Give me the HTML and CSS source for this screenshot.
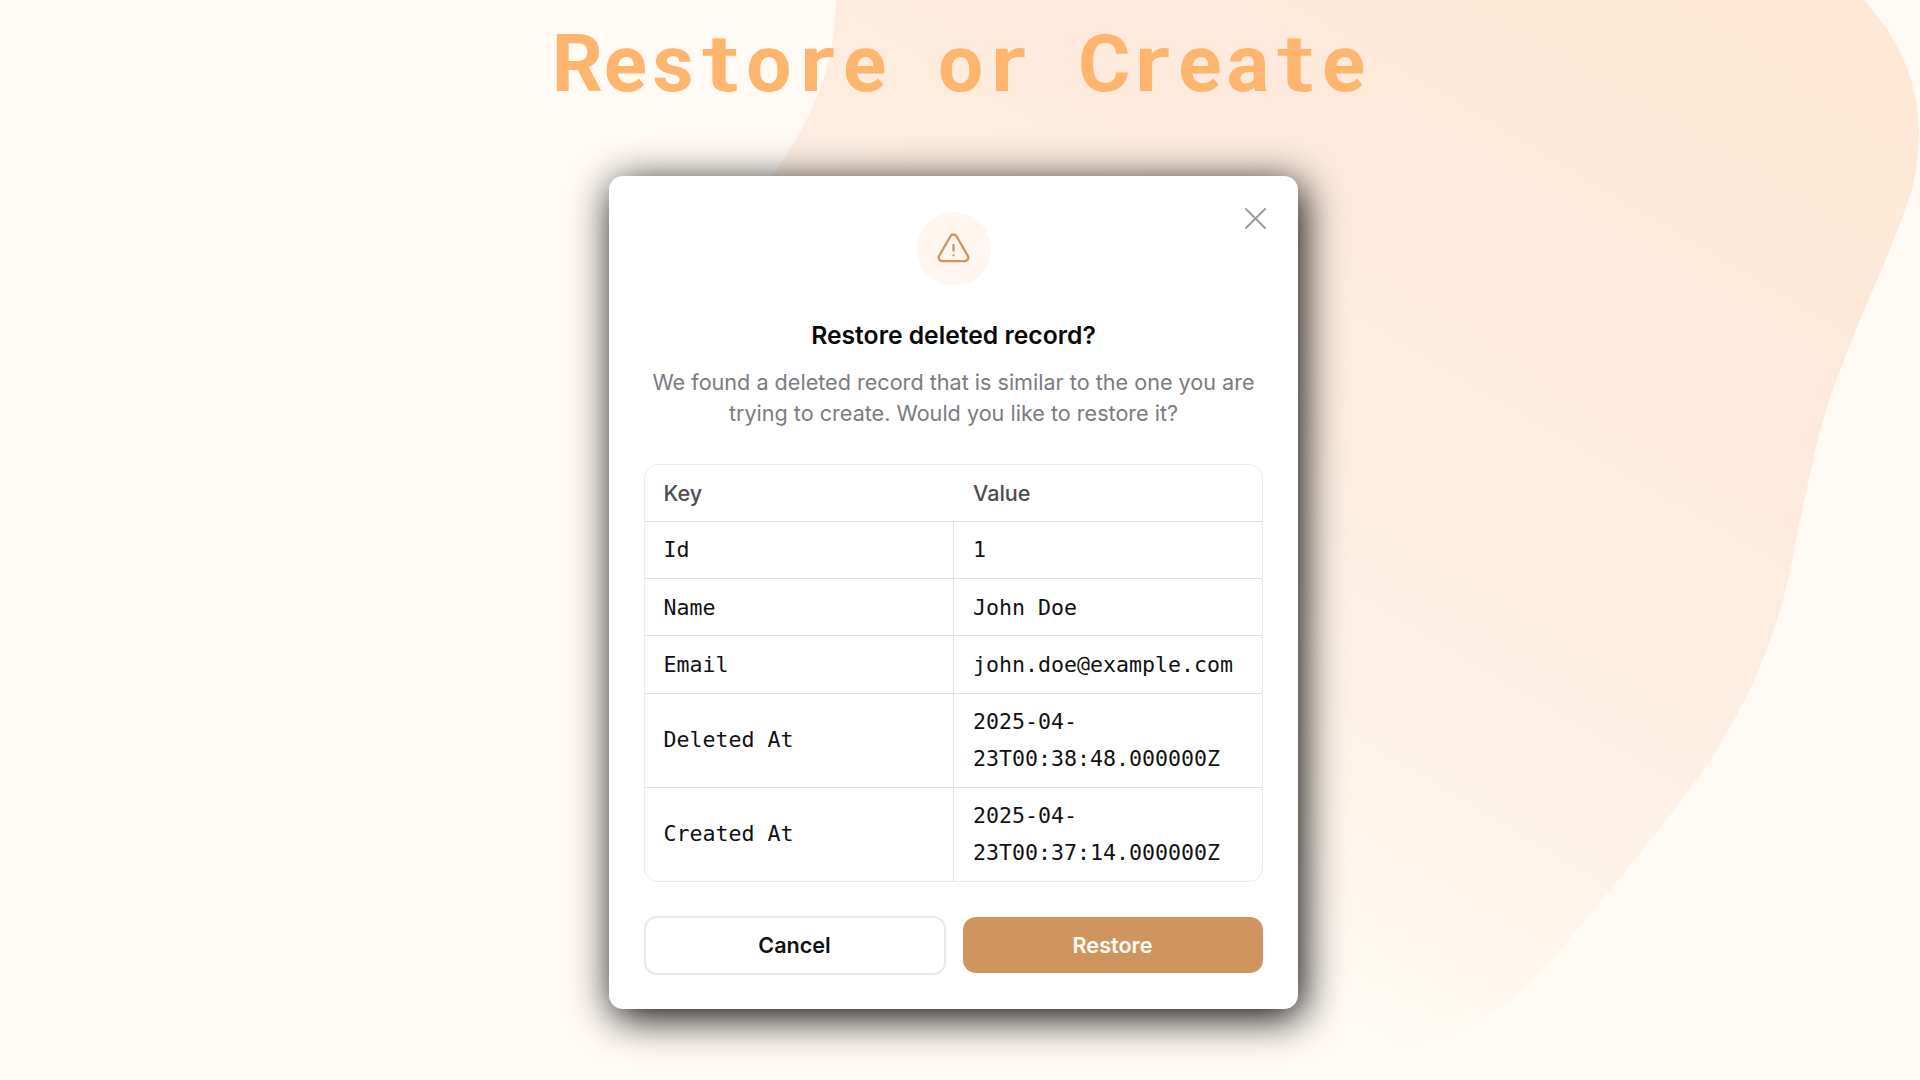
FILE: index.html
```html
<!DOCTYPE html>
<html lang="en">
<head>
<meta charset="utf-8">
<title>Restore or Create</title>
<link rel="stylesheet" href="styles.css">
</head>
<body>
<svg class="backdrop" viewBox="0 0 1920 1080" aria-hidden="true">
  <defs>
    <linearGradient id="blob" gradientUnits="userSpaceOnUse" x1="459" y1="-774" x2="-127" y2="215">
      <stop offset="0" stop-color="#ffe9d5"/>
      <stop offset="0.18" stop-color="#fee9d8"/>
      <stop offset="0.26" stop-color="#feeadc"/>
      <stop offset="0.46" stop-color="#feecde"/>
      <stop offset="0.54" stop-color="#feeee1"/>
      <stop offset="0.8" stop-color="#fff5eb"/>
      <stop offset="0.95" stop-color="#fffaf4"/>
    </linearGradient>
  </defs>
  <path fill="url(#blob)" d="M836 0C835 60 820 105 777 170C700 290 660 420 720 560C800 740 900 900 1080 1000C1200 1085 1340 1080 1455 1032C1529 1000 1550 960 1615 884C1655 834 1705 775 1733 722C1765 665 1785 605 1796 540C1815 450 1822 415 1841 368C1860 315 1895 245 1913 186C1927 120 1918 60 1864 0Z"/>
</svg>
<main class="stage">
  <h1 class="title"><span>R</span><span>e</span><span>s</span><span class="wide-t">t</span><span>o</span><span class="wide-r">r</span><span>e</span><span> </span><span>o</span><span class="wide-r">r</span><span> </span><span>C</span><span class="wide-r">r</span><span>e</span><span>a</span><span class="wide-t">t</span><span>e</span></h1>
  <section class="modal" role="dialog" aria-labelledby="heading">
    <button class="close" aria-label="Close">
      <svg viewBox="0 0 22 22"><path d="M1 1L21 21M21 1L1 21"/></svg>
    </button>
    <div class="badge">
      <svg viewBox="0 0 24 24"><path d="M12 9v3.75m-9.303 3.376c-.866 1.5.217 3.374 1.948 3.374h14.71c1.73 0 2.813-1.874 1.948-3.374L13.949 3.378c-.866-1.5-3.032-1.5-3.898 0L2.697 16.126ZM12 15.75h.007v.008H12v-.008Z"/></svg>
    </div>
    <h2 class="heading" id="heading">Restore deleted record?</h2>
    <p class="description">We found a deleted record that is similar to the one you are trying to create. Would you like to restore it?</p>
    <div class="record">
      <div class="row head"><div>Key</div><div>Value</div></div>
      <div class="row"><div>Id</div><div>1</div></div>
      <div class="row"><div>Name</div><div>John Doe</div></div>
      <div class="row"><div>Email</div><div>john.doe@example.com</div></div>
      <div class="row tall"><div>Deleted At</div><div>2025-04-<br>23T00:38:48.000000Z</div></div>
      <div class="row tall"><div>Created At</div><div>2025-04-<br>23T00:37:14.000000Z</div></div>
    </div>
    <div class="actions">
      <button class="button cancel">Cancel</button>
      <button class="button restore">Restore</button>
    </div>
  </section>
</main>
</body>
</html>
```
FILE: styles.css
```css
* { box-sizing: border-box; }
body {
  margin: 0;
  height: 1080px;
  overflow: hidden;
  background: #fffaf4;
  font-family: Inter, "Liberation Sans", sans-serif;
}
h1, h2, p { margin: 0; }
button { font-family: inherit; padding: 0; }
.backdrop { position: absolute; inset: 0; width: 1920px; height: 1080px; }
.stage {
  position: relative;
  display: flex;
  flex-direction: column;
  align-items: center;
  height: 1080px;
}
.title {
  display: flex;
  height: 176px;
  padding: 17px 0 0 1px;
  font: 700 80px/94px Roboto, sans-serif;
  color: #ffb56d;
}
.title span { width: 47.9px; display: flex; justify-content: center; white-space: pre; }
.title .wide-t { font-weight: 500; transform: scaleX(1.4); }
.title .wide-r { font-weight: 500; transform: scaleX(1.28); }
.modal {
  position: relative;
  display: flex;
  flex-direction: column;
  align-items: center;
  width: 689px;
  height: 833px;
  margin-right: 13px;
  padding: 36px 34px 0;
  border-radius: 14px;
  background: #fff;
  box-shadow: 4px 8px 42px #000;
}
.close {
  position: absolute;
  top: 32px;
  right: 32px;
  width: 21px;
  height: 21px;
  border: 0;
  background: none;
}
.close svg { display: block; width: 21px; height: 21px; fill: none; stroke: #9b9b9f; stroke-width: 2; stroke-linecap: round; }
.badge {
  display: flex;
  align-items: center;
  justify-content: center;
  width: 74px;
  height: 74px;
  border-radius: 50%;
  background: #fef6ef;
}
.badge svg { width: 37px; height: 37px; fill: none; stroke: #d0955f; stroke-width: 1.5; stroke-linecap: round; stroke-linejoin: round; }
.heading { margin-top: 31px; font-size: 24.7px; line-height: 37px; font-weight: 600; color: #09090b; }
.description { margin-top: 13px; font-size: 21.6px; line-height: 31px; text-align: center; color: #7b7b80; }
.record {
  width: 619px;
  margin: 35px 1px 0 0;
  border: 1px solid #ececed;
  border-radius: 14px;
  font: 21.6px/37.4px "DejaVu Sans Mono", monospace;
  color: #111113;
}
.row { display: grid; grid-template-columns: 1fr 1fr; height: 57.2px; border-top: 1px solid #dfdfe0; }
.row > div { display: flex; align-items: center; padding-left: 19px; }
.row > div + div { border-left: 1px solid #dfdfe0; }
.row.tall { height: 94px; }
.row.head { height: 56px; border-top: 0; font: 500 21.6px/31px Inter, sans-serif; color: #4d4d52; }
.row.head > div + div { border-left-color: transparent; }
.actions { display: flex; align-items: center; gap: 17px; width: 619px; margin: 34px 1px 0 0; }
.button { height: 56px; border: 0; border-radius: 13px; font-size: 21.6px; font-weight: 600; }
.cancel { width: 302px; height: 59px; border: 2px solid #e9e9ea; background: #fff; color: #111113; }
.restore { width: 300px; background: #d0955f; color: #fffaf4; }
```
